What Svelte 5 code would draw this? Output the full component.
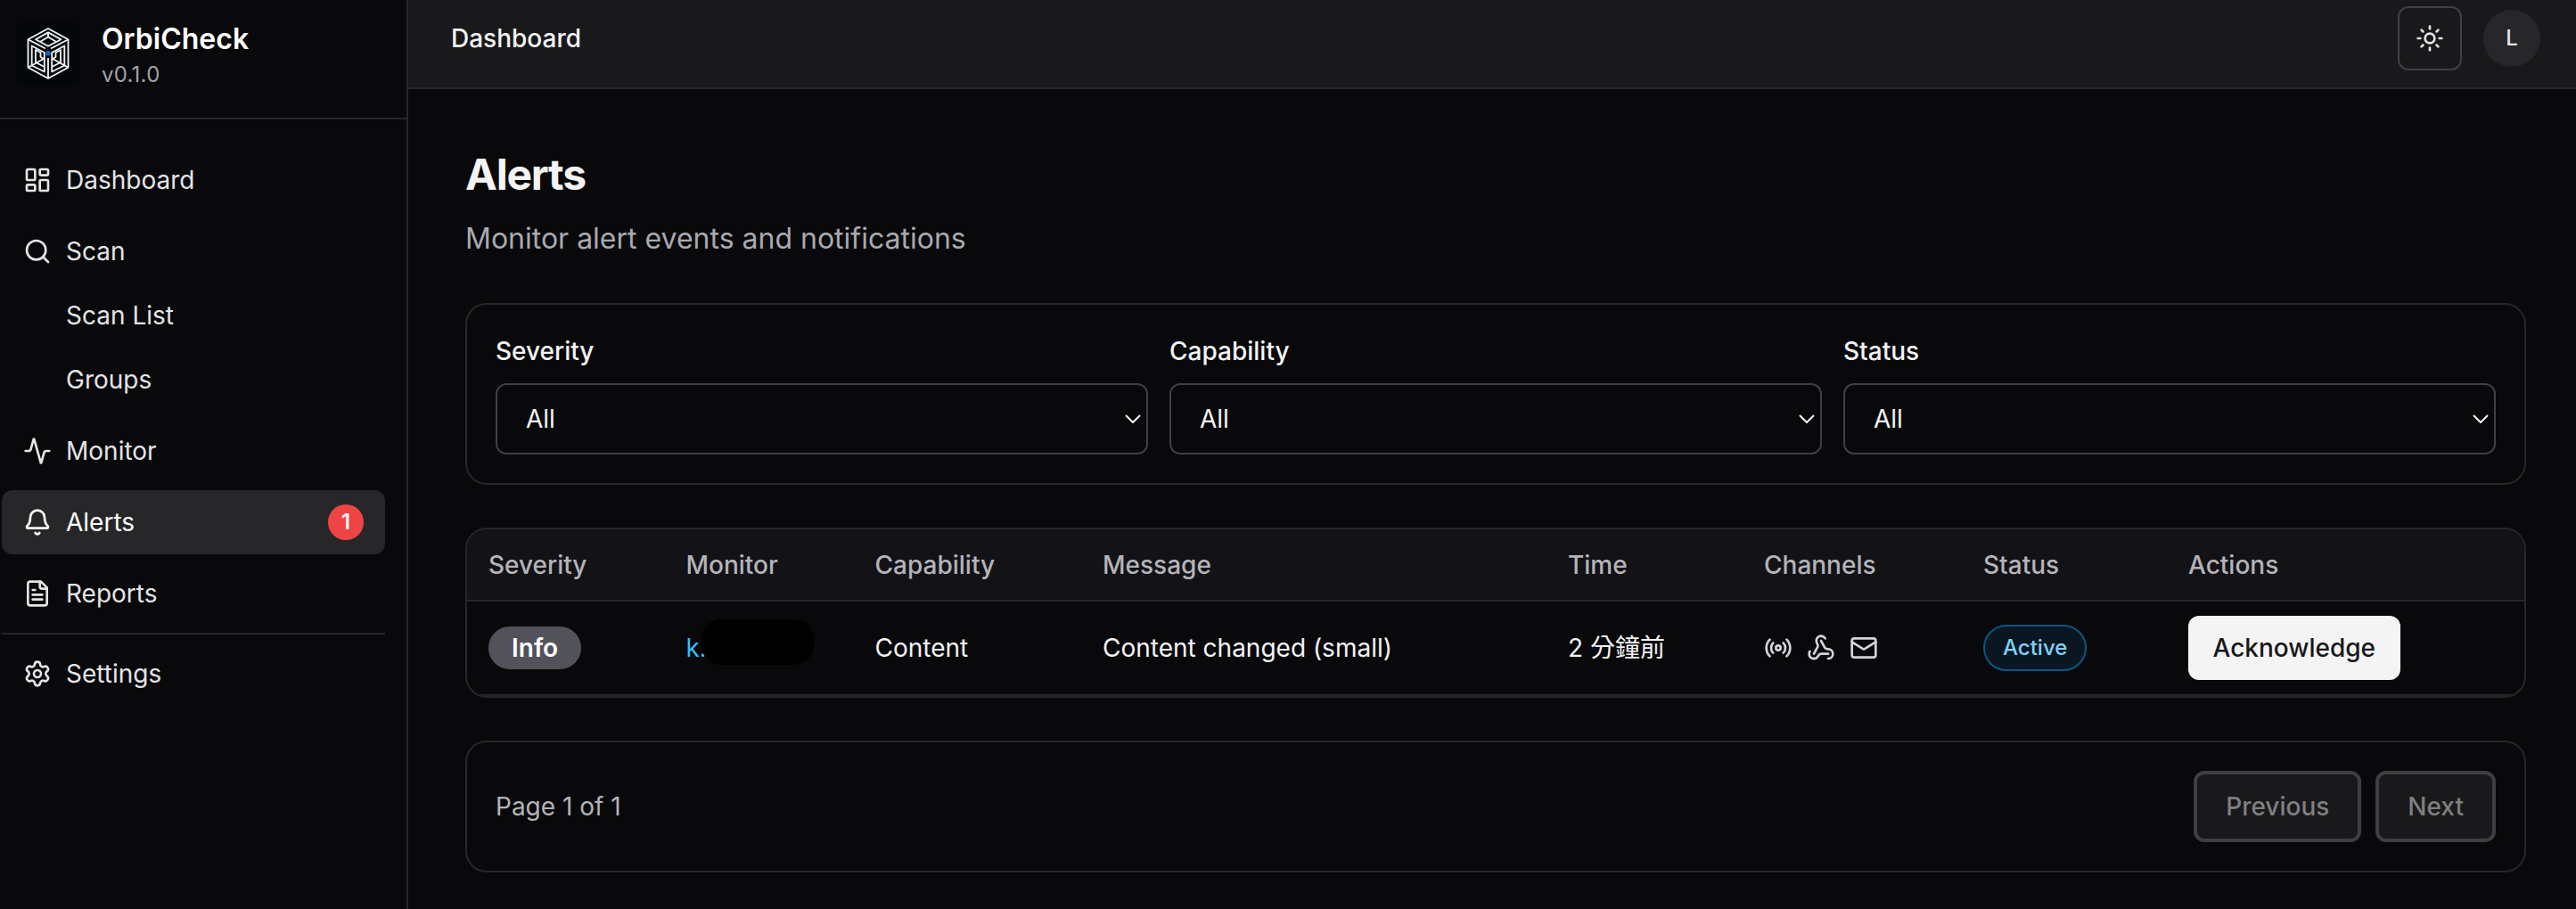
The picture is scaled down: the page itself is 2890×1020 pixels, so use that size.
<script>
	const icons = {
		dashboard: '<rect width="7" height="9" x="3" y="3" rx="1"/><rect width="7" height="5" x="14" y="3" rx="1"/><rect width="7" height="9" x="14" y="12" rx="1"/><rect width="7" height="5" x="3" y="16" rx="1"/>',
		search: '<circle cx="11" cy="11" r="8"/><path d="m21 21-4.3-4.3"/>',
		activity: '<path d="M22 12h-2.48a2 2 0 0 0-1.93 1.46l-2.35 8.36a.25.25 0 0 1-.48 0L9.24 2.18a.25.25 0 0 0-.48 0l-2.35 8.36A2 2 0 0 1 4.49 12H2"/>',
		bell: '<path d="M10.268 21a2 2 0 0 0 3.464 0"/><path d="M3.262 15.326A1 1 0 0 0 4 17h16a1 1 0 0 0 .74-1.673C19.41 13.956 18 12.499 18 8A6 6 0 0 0 6 8c0 4.499-1.411 5.956-2.738 7.326"/>',
		file: '<path d="M15 2H6a2 2 0 0 0-2 2v16a2 2 0 0 0 2 2h12a2 2 0 0 0 2-2V7Z"/><path d="M14 2v4a2 2 0 0 0 2 2h4"/><path d="M10 9H8"/><path d="M16 13H8"/><path d="M16 17H8"/>',
		settings: '<path d="M9.671 4.136a2.34 2.34 0 0 1 4.659 0 2.34 2.34 0 0 0 3.319 1.915 2.34 2.34 0 0 1 2.33 4.033 2.34 2.34 0 0 0 0 3.831 2.34 2.34 0 0 1-2.33 4.033 2.34 2.34 0 0 0-3.319 1.915 2.34 2.34 0 0 1-4.659 0 2.34 2.34 0 0 0-3.32-1.915 2.34 2.34 0 0 1-2.33-4.033 2.34 2.34 0 0 0 0-3.831A2.34 2.34 0 0 1 6.35 6.051a2.34 2.34 0 0 0 3.319-1.915"/><circle cx="12" cy="12" r="3"/>',
		sun: '<circle cx="12" cy="12" r="4"/><path d="M12 2v2"/><path d="M12 20v2"/><path d="m4.93 4.93 1.41 1.41"/><path d="m17.66 17.66 1.41 1.41"/><path d="M2 12h2"/><path d="M20 12h2"/><path d="m6.34 17.66-1.41 1.41"/><path d="m19.07 4.93-1.41 1.41"/>',
		radio: '<path d="M16.247 7.761a6 6 0 0 1 0 8.478"/><path d="M19.075 4.933a10 10 0 0 1 0 14.134"/><path d="M4.925 19.067a10 10 0 0 1 0-14.134"/><path d="M7.753 16.239a6 6 0 0 1 0-8.478"/><circle cx="12" cy="12" r="2"/>',
		webhook: '<path d="M18 16.98h-5.99c-1.1 0-1.95.94-2.48 1.9A4 4 0 0 1 2 17c.01-.7.2-1.4.57-2"/><path d="m6 17 3.13-5.78c.53-.97.1-2.18-.5-3.1a4 4 0 1 1 6.89-4.06"/><path d="m12 6 3.13 5.73C15.66 12.7 16.9 13 18 13a4 4 0 0 1 0 8"/>',
		mail: '<path d="m22 7-8.991 5.727a2 2 0 0 1-2.009 0L2 7"/><rect x="2" y="4" width="20" height="16" rx="2"/>',
	};

	const nav = [
		{ label: 'Dashboard', icon: 'dashboard' },
		{ label: 'Scan', icon: 'search', children: ['Scan List', 'Groups'] },
		{ label: 'Monitor', icon: 'activity' },
		{ label: 'Alerts', icon: 'bell', badge: 1, active: true },
		{ label: 'Reports', icon: 'file' },
	];

	const filters = ['Severity', 'Capability', 'Status'];
	const columns = ['Severity', 'Monitor', 'Capability', 'Message', 'Time', 'Channels', 'Status', 'Actions'];

	const alerts = [
		{
			severity: 'Info',
			monitor: 'k.',
			capability: 'Content',
			message: 'Content changed (small)',
			time: '2 分鐘前',
			channels: ['radio', 'webhook', 'mail'],
			status: 'Active',
		},
	];
</script>

{#snippet icon(name)}
	<svg class="icon" viewBox="0 0 24 24">{@html icons[name]}</svg>
{/snippet}

<div class="layout">
	<aside>
		<div class="brand">
			<svg class="logo" viewBox="18 24 72 72">
				<rect class="logo-bg" x="18" y="24" width="72" height="72" rx="10" />
				<path d="M54 32 76.5 44.2V75.8L54 88 31.5 75.8V44.2Z" />
				<path d="M40 44.2 54 36.4 68.5 44.2 54 51.8Z" />
				<path d="M54 37v4M45.5 46.5 54 41.5 62.5 46.5" />
				<path d="M31.5 44.2 51 54.5M76.5 44.2 57 54.5" />
				<path d="M54 65V87" />
				<path d="M35.7 74V51.5L49.8 59V80.5L35.7 73.5" />
				<path d="M40 71V56L45.5 59V64L49.8 66.5M32 75.5 49.8 65.5M41 70.5 49.8 75" />
				<path d="M72.3 74V51.5L58.2 59V80.5L72.3 73.5" />
				<path d="M68 71V56L62.5 59V64L58.2 66.5M76 75.5 58.2 65.5M67 70.5 58.2 75" />
				<circle class="logo-dot" cx="54" cy="59.7" r="2.8" />
			</svg>
			<div>
				<div class="name">OrbiCheck</div>
				<div class="version">v0.1.0</div>
			</div>
		</div>

		<nav>
			{#each nav as item}
				<div class="group">
					<a href="#top" class="item" class:active={item.active}>
						{@render icon(item.icon)}
						<span>{item.label}</span>
						{#if item.badge}
							<span class="count">{item.badge}</span>
						{/if}
					</a>
					{#each item.children || [] as child}
						<a href="#top" class="item child">{child}</a>
					{/each}
				</div>
			{/each}
			<div class="group bottom">
				<a href="#top" class="item">
					{@render icon('settings')}
					<span>Settings</span>
				</a>
			</div>
		</nav>
	</aside>

	<div class="page">
		<header>
			<span class="crumb">Dashboard</span>
			<button class="theme" aria-label="Toggle theme">{@render icon('sun')}</button>
			<div class="avatar">L</div>
		</header>

		<main>
			<h1>Alerts</h1>
			<p class="subtitle">Monitor alert events and notifications</p>

			<section class="card filters">
				{#each filters as filter}
					<div class="filter">
						<span class="label">{filter}</span>
						<div class="select">
							<span>All</span>
							<svg class="chevron" viewBox="0 0 18 10"><path d="M1 1l8 8 8-8" /></svg>
						</div>
					</div>
				{/each}
			</section>

			<section class="card table">
				<table>
					<thead>
						<tr>
							{#each columns as column}
								<th class={column.toLowerCase()}>{column}</th>
							{/each}
						</tr>
					</thead>
					<tbody>
						{#each alerts as alert}
							<tr>
								<td><span class="severity-pill">{alert.severity}</span></td>
								<td><a href="#top" class="link">{alert.monitor}<span class="mask"></span></a></td>
								<td>{alert.capability}</td>
								<td>{alert.message}</td>
								<td>{alert.time}</td>
								<td>
									<div class="channel-list">
										{#each alert.channels as channel}
											{@render icon(channel)}
										{/each}
									</div>
								</td>
								<td><span class="status-pill">{alert.status}</span></td>
								<td><button class="ack">Acknowledge</button></td>
							</tr>
						{/each}
					</tbody>
				</table>
			</section>

			<section class="card pagination">
				<span>Page 1 of 1</span>
				<div class="pager">
					<button disabled>Previous</button>
					<button disabled>Next</button>
				</div>
			</section>
		</main>
	</div>
</div>

<style>
	:global(body) {
		background: #09090b;
	}

	.layout {
		display: flex;
		height: 1020px;
		overflow: hidden;
		color: #f4f4f5;
		font-family: Inter, "Noto Sans CJK TC", sans-serif;
		font-size: 28px;
		line-height: 40px;
	}

	.layout * {
		box-sizing: border-box;
	}

	a {
		color: inherit;
		text-decoration: none;
	}

	button {
		font: inherit;
		letter-spacing: inherit;
	}

	.icon {
		flex: none;
		display: block;
		width: 32px;
		height: 32px;
		fill: none;
		stroke: currentColor;
		stroke-width: 2;
		stroke-linecap: round;
		stroke-linejoin: round;
	}

	/* Sidebar */
	aside {
		flex: none;
		width: 458px;
		border-right: 2px solid #27272a;
	}

	.brand {
		display: flex;
		gap: 24px;
		height: 134px;
		padding: 24px 0 0 18px;
		border-bottom: 2px solid #27272a;
	}

	.logo {
		width: 72px;
		height: 72px;
		fill: none;
		stroke: #f4f4f5;
		stroke-width: 1.8;
		stroke-linejoin: round;
	}

	.logo-bg {
		fill: #03070a;
		stroke: none;
	}

	.logo-dot {
		fill: #0f5fc8;
		stroke: none;
	}

	.name {
		color: #fff;
		font-size: 32px;
		font-weight: 600;
	}

	.version {
		color: #a1a1aa;
		font-size: 24px;
		letter-spacing: 0.01em;
	}

	nav {
		display: flex;
		flex-direction: column;
		gap: 8px;
		padding: 32px 24px 0 2px;
	}

	.item {
		display: flex;
		align-items: center;
		gap: 16px;
		height: 72px;
		padding: 0 24px;
		border-radius: 12px;
		color: #e4e4e7;
	}

	.item.active {
		background: #27272a;
		color: #fff;
	}

	.child {
		padding-left: 72px;
	}

	.count {
		width: 40px;
		height: 40px;
		margin-left: auto;
		border-radius: 50%;
		background: #ef4444;
		font-size: 24px;
		font-weight: 600;
		text-align: center;
	}

	.bottom {
		padding-top: 8px;
		border-top: 2px solid #27272a;
	}

	/* Top bar */
	.page {
		flex: 1;
		min-width: 0;
	}

	header {
		display: flex;
		align-items: center;
		gap: 24px;
		height: 100px;
		padding: 0 40px 12px 48px;
		border-bottom: 2px solid #27272a;
		background: #19191b;
	}

	.crumb {
		flex: 1;
		font-weight: 500;
	}

	.theme {
		display: flex;
		align-items: center;
		justify-content: center;
		width: 72px;
		height: 72px;
		padding: 0;
		border: 2px solid #3f3f46;
		border-radius: 12px;
		background: none;
		color: #e4e4e7;
	}

	.avatar {
		width: 64px;
		height: 64px;
		border-radius: 50%;
		background: #27272a;
		color: #e4e4e7;
		font-size: 24px;
		font-weight: 500;
		line-height: 64px;
		text-align: center;
	}

	/* Content */
	main {
		padding: 64px 56px 0 64px;
	}

	h1 {
		margin: 0;
		font-size: 48px;
		font-weight: 700;
		letter-spacing: -0.025em;
		line-height: 64px;
	}

	.subtitle {
		margin: 16px 0 48px;
		color: #a9a9b0;
		font-size: 32px;
		line-height: 48px;
	}

	.card {
		margin-bottom: 48px;
		border: 2px solid #27272a;
		border-radius: 24px;
	}

	.filters {
		display: flex;
		gap: 24px;
		height: 204px;
		padding: 32px;
	}

	.filter {
		flex: 1;
	}

	.label {
		display: block;
		margin-bottom: 16px;
		font-weight: 500;
	}

	.select {
		display: flex;
		align-items: center;
		justify-content: space-between;
		height: 80px;
		padding: 0 6px 0 32px;
		border: 2px solid #3f3f46;
		border-radius: 12px;
	}

	.chevron {
		width: 18px;
		height: 10px;
		fill: none;
		stroke: #f4f4f5;
		stroke-width: 2;
	}

	.table {
		overflow: hidden;
	}

	table {
		width: 100%;
		border-collapse: separate;
		border-spacing: 0;
		table-layout: fixed;
	}

	th,
	td {
		padding: 0 24px;
		border-bottom: 2px solid #27272a;
		text-align: left;
		white-space: nowrap;
	}

	th {
		height: 81px;
		background: #131217;
		color: #b4b4b8;
		font-weight: 500;
	}

	td {
		height: 106px;
	}

	.severity { width: 221.5px; }
	.monitor { width: 212px; }
	.capability { width: 255.5px; }
	.message { width: 522px; }
	.time { width: 220px; }
	.channels { width: 246px; }
	.status { width: 230px; }

	.severity-pill {
		display: inline-block;
		height: 48px;
		padding: 0 26px;
		border-radius: 24px;
		background: #52525b;
		color: #fff;
		font-weight: 600;
		line-height: 48px;
	}

	.link {
		position: relative;
		color: #38bdf8;
	}

	/* hides the rest of the monitor name */
	.mask {
		position: absolute;
		top: -15px;
		left: 16px;
		width: 128px;
		height: 51px;
		border-radius: 24px;
		background: #000;
	}

	.channel-list {
		display: flex;
		gap: 16px;
		color: #d4d4d8;
	}

	.status-pill {
		display: inline-block;
		height: 52px;
		padding: 0 20px;
		border: 2px solid #075985;
		border-radius: 26px;
		background: #0a1621;
		color: #7dd3fc;
		font-size: 24px;
		font-weight: 500;
		line-height: 48px;
	}

	.ack {
		display: block;
		height: 72px;
		padding: 0 27.5px;
		border: 0;
		border-radius: 12px;
		background: #f4f4f5;
		color: #18181b;
		font-weight: 500;
	}

	.pagination {
		display: flex;
		align-items: center;
		justify-content: space-between;
		height: 148px;
		padding: 0 32px;
		color: #b4b4b8;
	}

	.pager {
		display: flex;
		gap: 16px;
	}

	.pager button {
		height: 80px;
		padding: 0 32px;
		border: 4px solid #3f3f42;
		border-radius: 12px;
		background: #19191b;
		color: #7f7f81;
		font-weight: 500;
	}
</style>
